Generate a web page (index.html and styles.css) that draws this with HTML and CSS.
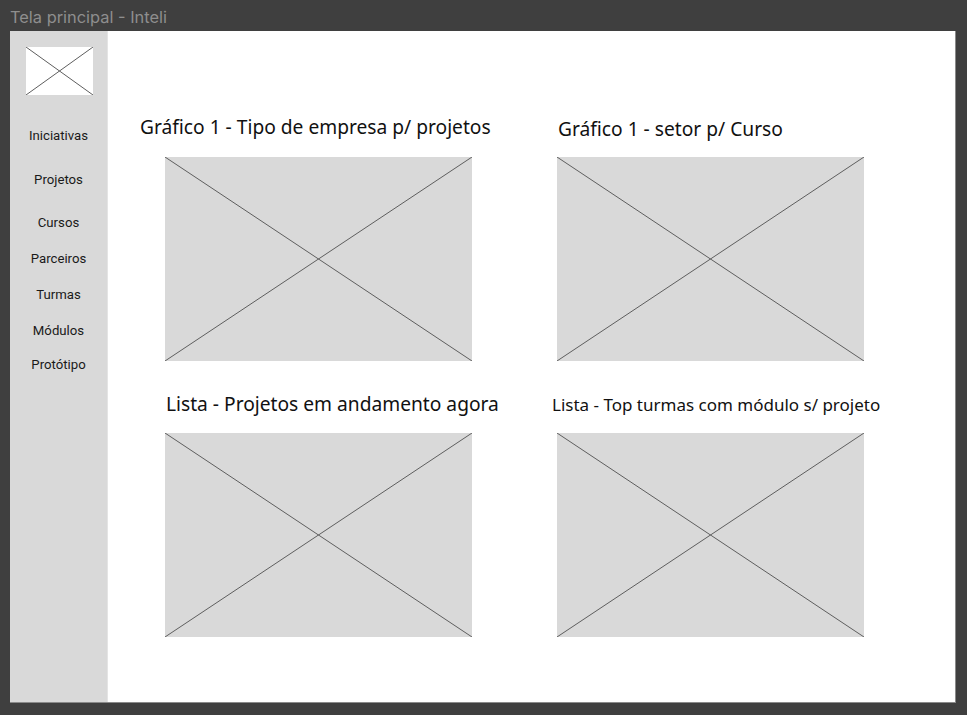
FILE: index.html
```html
<!DOCTYPE html>
<html lang="pt">
<head>
<meta charset="utf-8">
<title>Tela principal - Inteli</title>
<link rel="stylesheet" href="styles.css">
</head>
<body>
<header class="titlebar">Tela principal - Inteli</header>
<div class="frame">
  <aside class="sidebar">
    <div class="logo">
      <svg class="xsvg" viewBox="0 0 100 100" preserveAspectRatio="none">
        <line x1="0" y1="0" x2="100" y2="100" vector-effect="non-scaling-stroke"/>
        <line x1="100" y1="0" x2="0" y2="100" vector-effect="non-scaling-stroke"/>
      </svg>
    </div>
    <nav class="nav">
      <a class="nav-item">Iniciativas</a>
      <a class="nav-item nav-wide">Projetos</a>
      <a class="nav-item nav-wide2">Cursos</a>
      <a class="nav-item">Parceiros</a>
      <a class="nav-item">Turmas</a>
      <a class="nav-item">Módulos</a>
      <a class="nav-item nav-tight">Protótipo</a>
    </nav>
  </aside>
  <main class="main">
    <section class="cell">
      <h2 class="cell-title t1">Gráfico 1 - Tipo de empresa p/ projetos</h2>
      <div class="placeholder">
        <svg class="xsvg" viewBox="0 0 100 100" preserveAspectRatio="none">
          <line x1="0" y1="0" x2="100" y2="100" vector-effect="non-scaling-stroke"/>
          <line x1="100" y1="0" x2="0" y2="100" vector-effect="non-scaling-stroke"/>
        </svg>
      </div>
    </section>
    <section class="cell">
      <h2 class="cell-title t2">Gráfico 1 - setor p/ Curso</h2>
      <div class="placeholder">
        <svg class="xsvg" viewBox="0 0 100 100" preserveAspectRatio="none">
          <line x1="0" y1="0" x2="100" y2="100" vector-effect="non-scaling-stroke"/>
          <line x1="100" y1="0" x2="0" y2="100" vector-effect="non-scaling-stroke"/>
        </svg>
      </div>
    </section>
    <section class="cell">
      <h2 class="cell-title t3">Lista - Projetos em andamento agora</h2>
      <div class="placeholder">
        <svg class="xsvg" viewBox="0 0 100 100" preserveAspectRatio="none">
          <line x1="0" y1="0" x2="100" y2="100" vector-effect="non-scaling-stroke"/>
          <line x1="100" y1="0" x2="0" y2="100" vector-effect="non-scaling-stroke"/>
        </svg>
      </div>
    </section>
    <section class="cell">
      <h2 class="cell-title t4">Lista - Top turmas com módulo s/ projeto</h2>
      <div class="placeholder">
        <svg class="xsvg" viewBox="0 0 100 100" preserveAspectRatio="none">
          <line x1="0" y1="0" x2="100" y2="100" vector-effect="non-scaling-stroke"/>
          <line x1="100" y1="0" x2="0" y2="100" vector-effect="non-scaling-stroke"/>
        </svg>
      </div>
    </section>
  </main>
</div>
</body>
</html>
```

FILE: styles.css
```css
* { box-sizing: border-box; }
html, body { margin: 0; padding: 0; }
body {
  background: #3f3f3f;
  width: 967px;
  height: 715px;
  overflow: hidden;
  font-family: "Noto Sans", "Open Sans", sans-serif;
}
.titlebar {
  height: 31px;
  padding-left: 10px;
  padding-top: 7px;
  font-family: Inter, Roboto, sans-serif;
  font-size: 16.4px;
  line-height: 21px;
  color: #8e8e8e;
}
.frame {
  display: flex;
  margin-left: 10px;
  width: 946px;
  height: 672px;
  background: #ffffff;
  border-right: 1px solid #8a8a8a;
  border-bottom: 1px solid #8a8a8a;
}
.sidebar {
  width: 98px;
  flex: none;
  background: #d9d9d9;
  border-right: 1px solid #e4e4e4;
  padding: 16px 0 0 16px;
}
.logo {
  width: 67px;
  height: 48px;
  background: #ffffff;
}
.xsvg {
  display: block;
  width: 100%;
  height: 100%;
}
.xsvg line {
  stroke: #5e5e5e;
  stroke-width: 1;
}
.nav {
  display: flex;
  flex-direction: column;
  align-items: center;
  gap: 20px;
  margin-top: 33px;
  margin-left: -16px;
}
.nav-item {
  font-family: Roboto, Inter, sans-serif;
  font-size: 13.2px;
  line-height: 16px;
  color: #1a1a1a;
}
.nav-wide { margin-top: 8px; }
.nav-wide2 { margin-top: 7px; }
.nav-tight { margin-top: -2px; }
.main {
  flex: 1;
  display: grid;
  grid-template-columns: 307px 307px;
  column-gap: 85px;
  row-gap: 32px;
  align-content: start;
  padding: 85px 0 0 57px;
}
.cell {
  display: flex;
  flex-direction: column;
}
.cell-title {
  margin: 0 0 17px 0;
  height: 24px;
  font-size: 19.2px;
  font-weight: 400;
  line-height: 24px;
  color: #111111;
  white-space: nowrap;
}
.t1 { margin-left: -25px; margin-top: -1px; margin-bottom: 18px; }
.t2 { margin-left: 1px; margin-top: 1px; margin-bottom: 16px; }
.t3 { margin-left: 1px; margin-top: -1px; margin-bottom: 17px; }
.t4 { margin-left: -5px; font-size: 17px; margin-top: 0px; margin-bottom: 16px; }
.placeholder {
  width: 307px;
  height: 204px;
  background: #d9d9d9;
}
```
